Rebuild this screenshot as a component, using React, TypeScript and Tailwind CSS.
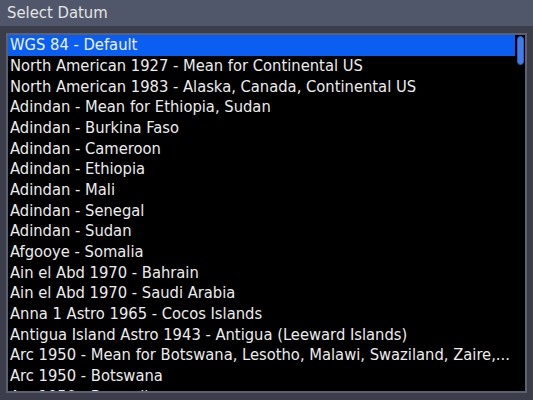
const datums = [
  "WGS 84 - Default",
  "North American 1927 - Mean for Continental US",
  "North American 1983 - Alaska, Canada, Continental US",
  "Adindan - Mean for Ethiopia, Sudan",
  "Adindan - Burkina Faso",
  "Adindan - Cameroon",
  "Adindan - Ethiopia",
  "Adindan - Mali",
  "Adindan - Senegal",
  "Adindan - Sudan",
  "Afgooye - Somalia",
  "Ain el Abd 1970 - Bahrain",
  "Ain el Abd 1970 - Saudi Arabia",
  "Anna 1 Astro 1965 - Cocos Islands",
  "Antigua Island Astro 1943 - Antigua (Leeward Islands)",
  "Arc 1950 - Mean for Botswana, Lesotho, Malawi, Swaziland, Zaire,...",
  "Arc 1950 - Botswana",
  "Arc 1950 - Burundi",
];

export default function App() {
  const selected = 0;

  return (
    <div
      className="w-[533px] h-[400px] bg-[#3b3e4a] flex flex-col overflow-hidden font-stretch-condensed"
      style={{ fontFamily: '"DejaVu Sans Condensed", "DejaVu Sans", Verdana, sans-serif' }}
    >
      {/* title bar */}
      <div className="h-[26px] bg-[#50576a] flex items-center px-[7px] text-[16.5px] text-[#e4e4e4] shrink-0">
        Select Datum
      </div>

      {/* list */}
      <div className="flex-1 px-[6px] pt-[7px] pb-[7px] min-h-0">
        <div className="relative h-full border-2 border-[#5c6170] bg-black overflow-hidden">
          <ul className="flex flex-col pr-[10px]">
            {datums.map((d, i) => (
              <li
                key={d}
                className={`h-[20.7px] shrink-0 flex items-center pl-[2px] text-[16.4px] whitespace-nowrap leading-none ${
                  i === selected ? "bg-[#0a5ef2] text-[#eef2ff]" : "text-[#ececec]"
                }`}
              >
                {d}
              </li>
            ))}
          </ul>

          {/* scroll thumb */}
          <div className="absolute right-[1px] top-[1px] w-[7px] h-[29px] rounded-full bg-[#3f7de8] border border-[#2c5fc4]" />
        </div>
      </div>
    </div>
  );
}
